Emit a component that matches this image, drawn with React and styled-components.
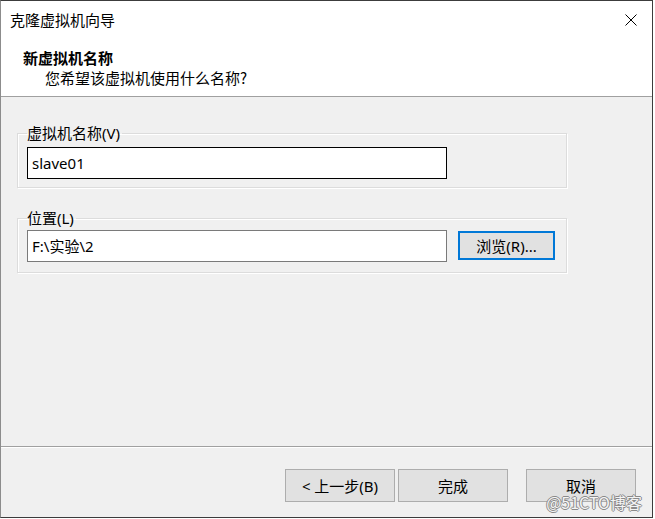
import React from 'react';
import styled, { createGlobalStyle } from 'styled-components';

const GlobalStyle = createGlobalStyle`
  html, body {
    margin: 0;
    padding: 0;
    background: #ffffff;
  }
  body {
    font-family: "Noto Sans", "Noto Sans CJK SC", sans-serif;
    font-size: 15px;
    color: #000;
  }
`;

const Window = styled.div`
  box-sizing: border-box;
  width: 653px;
  height: 518px;
  border: 1px solid #3c3c3c;
  border-left-color: #8c8c8c;
  display: flex;
  flex-direction: column;
  position: relative;
  background: #f0f0f0;
  overflow: hidden;
`;

const Header = styled.div`
  background: #ffffff;
  height: 95px;
  border-bottom: 1px solid #a0a0a0;
  display: flex;
  flex-direction: column;
`;

const TitleBar = styled.div`
  height: 38px;
  display: flex;
  align-items: center;
  justify-content: space-between;
  padding: 0 0 0 9px;
`;

const TitleText = styled.div`
  font-family: "Noto Sans CJK SC", sans-serif;
  line-height: 20px;
`;

const CloseButton = styled.div`
  width: 46px;
  height: 38px;
  display: flex;
  align-items: center;
  justify-content: center;
  margin-right: -2px;
`;

const HeaderTitle = styled.div`
  font-family: "Noto Sans CJK SC", sans-serif;
  font-weight: 700;
  line-height: 20px;
  margin: 9px 0 0 22px;
`;

const HeaderSub = styled.div`
  font-family: "Noto Sans CJK SC", sans-serif;
  line-height: 20px;
  margin: 0 0 0 44px;
`;

const Body = styled.div`
  flex: 1;
  padding: 26px 0 0 16px;
  display: flex;
  flex-direction: column;
  gap: 20px;
  border-bottom: 1px solid #a0a0a0;
  box-shadow: 0 1px 0 #ffffff;
`;

const Group = styled.fieldset`
  box-sizing: border-box;
  width: 550px;
  height: ${({ $h }) => $h}px;
  margin: 0;
  border: 1px solid #dcdcdc;
  box-shadow: inset 1px 1px 0 #ffffff, 1px 1px 0 #ffffff;
  padding: ${({ $top }) => $top}px 0 0 9px;
  display: flex;
  align-items: flex-start;
  gap: 11px;
`;

const Legend = styled.legend`
  font-family: "Noto Sans", "Noto Sans CJK SC", sans-serif;
  line-height: 20px;
  padding: 0 2px 0 0;
  margin-left: 0;
  color: #000;
`;

const Field = styled.div`
  box-sizing: border-box;
  width: 420px;
  height: 32px;
  background: #ffffff;
  border: 1px solid ${({ $focused }) => ($focused ? '#000000' : '#7a7a7a')};
  padding: 0 0 0 4px;
  display: flex;
  align-items: center;
  font-family: "Noto Sans", "Noto Sans CJK SC", sans-serif;
  line-height: 20px;
  margin-top: ${({ $mt }) => $mt || 0}px;
`;

const Button = styled.div`
  box-sizing: border-box;
  width: ${({ $w }) => $w || 110}px;
  height: ${({ $hgt }) => $hgt || 33}px;
  background: #e1e1e1;
  border: ${({ $primary }) => ($primary ? '2px solid #0078d7' : '1px solid #adadad')};
  display: flex;
  align-items: center;
  justify-content: center;
  font-family: "Noto Sans", "Noto Sans CJK SC", sans-serif;
  line-height: 20px;
  color: #000;
  margin-top: ${({ $mt }) => $mt || 0}px;
`;

const Footer = styled.div`
  box-sizing: border-box;
  height: 70px;
  flex: none;
  display: flex;
  align-items: flex-start;
  padding: 22px 0 0 284px;
`;

const ButtonPair = styled.div`
  display: flex;
  gap: 3px;
  margin-right: 18px;
`;

const Watermark = styled.div`
  position: absolute;
  right: 10px;
  bottom: 6px;
  font-family: "Noto Sans CJK SC", sans-serif;
  font-size: 16px;
  line-height: 18px;
  color: #f4f4f4;
  text-shadow: 1px 0 0 #8a8a8a, -1px 0 0 #8a8a8a, 0 1px 0 #8a8a8a, 0 -1px 0 #8a8a8a;
`;

const CloseIcon = () => (
  <svg width="12" height="12" viewBox="0 0 12 12">
    <path d="M0.5 0.5 L11.5 11.5 M11.5 0.5 L0.5 11.5" stroke="#000" strokeWidth="1" fill="none" />
  </svg>
);

export default function App() {
  return (
    <>
      <GlobalStyle />
      <Window>
        <Header>
          <TitleBar>
            <TitleText>克隆虚拟机向导</TitleText>
            <CloseButton>
              <CloseIcon />
            </CloseButton>
          </TitleBar>
          <HeaderTitle>新虚拟机名称</HeaderTitle>
          <HeaderSub>您希望该虚拟机使用什么名称?</HeaderSub>
        </Header>

        <Body>
          <Group $h={65} $top={4}>
            <Legend>虚拟机名称(V)</Legend>
            <Field $focused>slave01</Field>
          </Group>
          <Group $h={65} $top={2}>
            <Legend>位置(L)</Legend>
            <Field>F:\实验\2</Field>
            <Button $primary $w={97} $hgt={29} $mt={1}>浏览(R)...</Button>
          </Group>
        </Body>

        <Footer>
          <ButtonPair>
            <Button>&lt; 上一步(B)</Button>
            <Button>完成</Button>
          </ButtonPair>
          <Button>取消</Button>
        </Footer>

        <Watermark>@51CTO博客</Watermark>
      </Window>
    </>
  );
}
